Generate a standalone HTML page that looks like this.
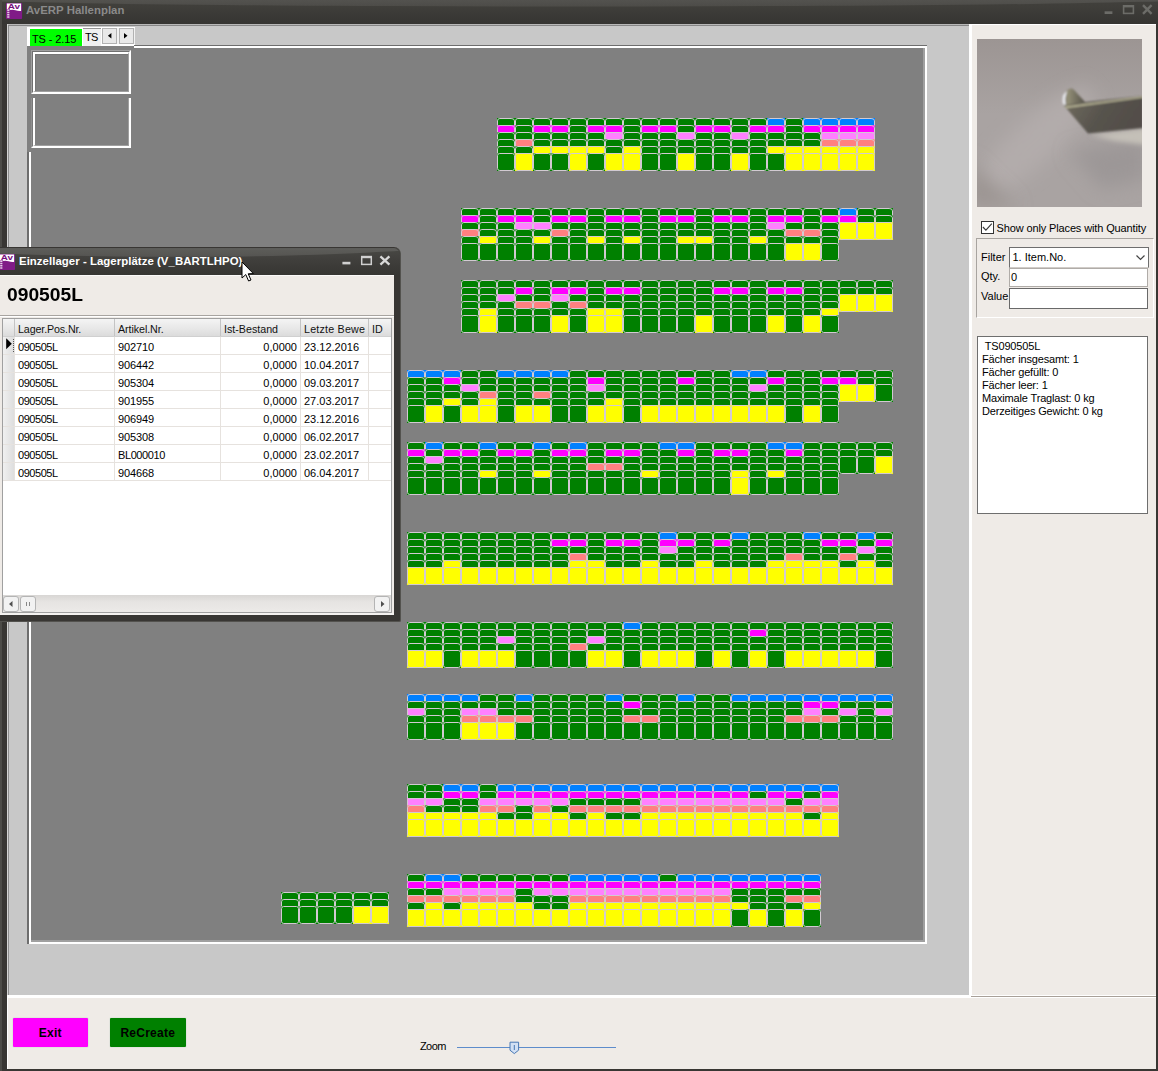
<!DOCTYPE html>
<html>
<head>
<meta charset="utf-8">
<title>AvERP Hallenplan</title>
<style>
*{box-sizing:border-box;margin:0;padding:0}
html,body{width:1158px;height:1071px;overflow:hidden;background:#383633;font-family:"Liberation Sans",sans-serif;font-size:11px;color:#000}
.a{position:absolute}
.t{position:absolute;white-space:pre;line-height:13px}
#titlebar{left:0;top:0;width:1158px;height:24px;background:linear-gradient(#42413d 0,#3f3e3a 7px,#3b3a37 14px,#363532 24px)}
#lb{left:0;top:0;width:2px;height:1071px;background:#4c4b47}
#client{left:7px;top:24px;width:1149px;height:1045px;background:#c8c8c8}
#rp{left:969.3px;top:24px;width:186.7px;height:973px;background:linear-gradient(90deg,#fff 2.7px,#efebe7 2.7px);border-top:1px solid #fff}
#bp{left:8px;top:995.2px;width:1148px;height:73.7px;background:linear-gradient(#fff 2.6px,#efebe7 2.6px)}
#canvas{left:27px;top:46px;width:900px;height:898px;background:#808080}
.btn{position:absolute;text-align:center;font-weight:bold;font-size:12px;line-height:30px;height:30px}
table{border-collapse:collapse}
</style>
</head>
<body>
<!-- main window frame -->
<div class="a" id="titlebar"></div>
<svg class="a" style="left:0;top:0" width="1158" height="24" viewBox="0 0 1158 24"><defs><linearGradient id="gl0" x1="0" y1="0" x2="0" y2="1"><stop offset="0" stop-color="#fff" stop-opacity=".13"/><stop offset="1" stop-color="#fff" stop-opacity=".07"/></linearGradient></defs><ellipse cx="579" cy="-2.3" rx="640" ry="8.8" fill="url(#gl0)"/></svg>
<div class="a" id="lb"></div>
<div class="a" id="client"></div>
<div class="a" style="left:7px;top:24px;width:1px;height:1045px;background:#d4d4d4"></div>
<div class="a" style="left:8px;top:25px;width:1px;height:970px;background:#8e8e8e"></div>
<div class="a" style="left:8px;top:24px;width:961px;height:1px;background:#b8b8b8"></div>
<div class="a" style="left:8px;top:25px;width:961px;height:1px;background:#868686"></div>

<!-- title icon + text -->
<svg class="a" style="left:6px;top:3px" width="17" height="17" viewBox="0 0 17 17">
<rect x="0" y="0" width="16.1" height="16" rx="0.8" fill="#801b87"/>
<path d="M0.9 0.4H15.1V7.9Q12 8.2 9.5 7.2Q7 6.3 4.2 6.9L4 6.2H0.9z" fill="#fff"/>
<text x="1.7" y="5.7" font-family="Liberation Sans" font-weight="bold" font-size="6.6" fill="#760e7c" textLength="12.3" lengthAdjust="spacingAndGlyphs">Av</text>
<path d="M2.3 6.4V15" stroke="#e6cde8" stroke-width="2.2" stroke-dasharray="1.5 0.8"/>
</svg>
<div class="t" style="left:26px;top:3px;font-weight:bold;font-size:11.4px;line-height:14px;color:#8a8a8a;letter-spacing:0.02px">AvERP Hallenplan</div>
<!-- main window controls -->
<svg class="a" style="left:1100px;top:0" width="58" height="24" viewBox="0 0 58 24">
<rect x="4.6" y="11.3" width="7.8" height="2.7" fill="#6c6c68"/>
<rect x="23.6" y="5.8" width="9.8" height="7.6" fill="none" stroke="#6c6c68" stroke-width="1.6"/>
<rect x="23" y="5" width="11" height="2.4" fill="#6c6c68"/>
<path d="M43 5.2 L51.6 13.8 M51.6 5.2 L43 13.8" stroke="#6c6c68" stroke-width="2.4" fill="none"/>
</svg>

<!-- right + bottom panels -->
<div class="a" id="rp"></div>
<div class="a" id="bp"></div>
<div class="a" style="left:7px;top:995.2px;width:1.4px;height:73.7px;background:#fff"></div>
<div class="a" style="left:971px;top:996px;width:185px;height:1px;background:#a8a098"></div>

<!-- tab strip -->
<div class="a" style="left:27px;top:26.5px;width:108px;height:19.5px;background:#fff"></div>
<div class="a" style="left:101.5px;top:28px;width:33px;height:16px;background:#f2f2f2"></div>
<div class="a" style="left:29.6px;top:28.7px;width:52.4px;height:17.3px;background:#00ff00"></div>
<div class="t" style="left:32px;top:33px;font-size:11px;letter-spacing:-0.1px">TS - 2.15</div>
<div class="a" style="left:83px;top:28px;width:18px;height:18px;background:#f0f0f0;border-top:1px solid #949494"></div>
<div class="t" style="left:85px;top:31px;font-size:11px;letter-spacing:-0.8px">TS</div>
<div class="a" style="left:102px;top:28.4px;width:15.2px;height:15.2px;background:#e9e9e9;border:1px solid #b2b2b2"></div>
<div class="a" style="left:118.5px;top:28.4px;width:15.1px;height:15.2px;background:#e9e9e9;border:1px solid #b2b2b2"></div>
<svg class="a" style="left:102px;top:28px" width="32" height="16" viewBox="0 0 32 16"><path d="M9.4 5 L9.4 10.4 L5.9 7.7z M22 5 L22 10.4 L25.5 7.7z" fill="#000"/></svg>
<!-- canvas -->
<div class="a" id="canvas"></div>
<div class="a" style="left:134px;top:45px;width:793px;height:1px;background:#6e6e6e"></div>
<div class="a" style="left:134px;top:46px;width:793px;height:2px;background:#fff"></div>
<div class="a" style="left:27.4px;top:152px;width:1.6px;height:792px;background:#6e6e6e"></div>
<div class="a" style="left:29px;top:152px;width:2px;height:792px;background:#fff"></div>
<div class="a" style="left:923px;top:48px;width:2px;height:894px;background:#a0a0a0"></div>
<div class="a" style="left:925px;top:46px;width:2px;height:898px;background:#fff"></div>
<div class="a" style="left:31px;top:940px;width:894px;height:2px;background:#a0a0a0"></div>
<div class="a" style="left:29px;top:942px;width:898px;height:2px;background:#fff"></div>
<!-- two boxes -->
<div class="a" style="left:31px;top:50px;width:100px;height:44px;border-style:solid;border-color:#a0a0a0 #fff #fff #a0a0a0;border-width:1px 1px 1px 1px"><div style="width:100%;height:100%;border-style:solid;border-color:#707070 #fff #fff #707070;border-width:1px"><div style="width:100%;height:100%;border-style:solid;border-color:#fff #a0a0a0 #a0a0a0 #fff;border-width:2px 1px 1px 2px"><div style="width:100%;height:100%;border-style:solid;border-color:#767676 #808080 #808080 #767676;border-width:1px 0 0 1px"></div></div></div></div>
<div class="a" style="left:31px;top:98px;width:100px;height:50px;border-style:solid;border-color:#a0a0a0 #fff #fff #909090;border-width:0 1px 1px 1px"><div style="width:100%;height:100%;border-style:solid;border-color:#707070 #fff #fff #787878;border-width:0 1px 1px 1px"><div style="width:100%;height:100%;border-style:solid;border-color:#fff #a0a0a0 #a0a0a0 #fff;border-width:0 1px 1px 2px"></div></div></div>
<!-- storage cells -->
<svg class="a" style="left:0;top:0" width="1158" height="1071" viewBox="0 0 1158 1071">
<defs>
<path id="t" d="M0.5 7.5V2.9Q0.5 0.5 2.9 0.5H14.1Q17.5 0.5 17.5 2.9V7.5" fill="none" stroke="#d2cad2" stroke-width="1"/>
<rect id="T" x="0.5" y="0.5" width="17" height="17" rx="2.2" fill="none" stroke="#d2cad2" stroke-width="1"/>
</defs>
<path fill="#008000" d="M497 118h270v7h-270zM785 118h18v7h-18zM515 125h18v7h-18zM569 125h18v7h-18zM623 125h18v7h-18zM677 125h18v7h-18zM731 125h18v7h-18zM785 125h18v7h-18zM497 132h108v7h-108zM623 132h54v7h-54zM695 132h36v7h-36zM749 132h72v7h-72zM497 139h18v7h-18zM533 139h288v7h-288zM497 146h36v7h-36zM605 146h18v7h-18zM641 146h126v7h-126zM497 153h18v18h-18zM533 153h36v18h-36zM587 153h18v18h-18zM641 153h36v18h-36zM695 153h36v18h-36zM749 153h36v18h-36zM461 208h378v7h-378zM857 208h36v7h-36zM479 215h18v7h-18zM533 215h18v7h-18zM587 215h18v7h-18zM641 215h18v7h-18zM695 215h18v7h-18zM749 215h18v7h-18zM803 215h18v7h-18zM857 215h36v7h-36zM461 222h54v7h-54zM551 222h216v7h-216zM785 222h54v7h-54zM479 229h72v7h-72zM569 229h216v7h-216zM821 229h18v7h-18zM461 236h18v7h-18zM497 236h36v7h-36zM551 236h36v7h-36zM605 236h18v7h-18zM641 236h36v7h-36zM713 236h36v7h-36zM767 236h72v7h-72zM461 243h324v18h-324zM821 243h18v18h-18zM461 280h432v7h-432zM461 287h54v7h-54zM533 287h18v7h-18zM587 287h18v7h-18zM641 287h72v7h-72zM749 287h18v7h-18zM803 287h90v7h-90zM461 294h36v7h-36zM515 294h36v7h-36zM569 294h270v7h-270zM461 301h54v7h-54zM551 301h18v7h-18zM587 301h252v7h-252zM461 308h18v7h-18zM497 308h90v7h-90zM623 308h198v7h-198zM461 315h18v18h-18zM497 315h54v18h-54zM569 315h18v18h-18zM623 315h72v18h-72zM713 315h54v18h-54zM785 315h18v18h-18zM821 315h18v18h-18zM461 370h36v7h-36zM569 370h162v7h-162zM767 370h126v7h-126zM407 377h36v7h-36zM461 377h126v7h-126zM605 377h72v7h-72zM695 377h72v7h-72zM785 377h36v7h-36zM857 377h36v7h-36zM407 384h54v7h-54zM479 384h108v7h-108zM605 384h144v7h-144zM767 384h72v7h-72zM875 384h18v18h-18zM407 391h72v7h-72zM497 391h36v7h-36zM551 391h288v7h-288zM407 398h36v7h-36zM461 398h18v7h-18zM497 398h108v7h-108zM623 398h216v7h-216zM407 405h18v18h-18zM443 405h18v18h-18zM497 405h18v18h-18zM551 405h36v18h-36zM623 405h18v18h-18zM785 405h18v18h-18zM821 405h18v18h-18zM407 442h18v7h-18zM443 442h36v7h-36zM497 442h36v7h-36zM551 442h18v7h-18zM587 442h72v7h-72zM695 442h72v7h-72zM803 442h90v7h-90zM425 449h18v7h-18zM479 449h18v7h-18zM533 449h18v7h-18zM587 449h18v7h-18zM641 449h36v7h-36zM695 449h18v7h-18zM749 449h36v7h-36zM803 449h90v7h-90zM407 456h18v7h-18zM443 456h396v7h-396zM839 456h36v18h-36zM407 463h180v7h-180zM623 463h216v7h-216zM407 470h72v7h-72zM497 470h36v7h-36zM551 470h90v7h-90zM659 470h72v7h-72zM749 470h18v7h-18zM785 470h54v7h-54zM407 477h324v18h-324zM749 477h90v18h-90zM407 532h252v7h-252zM677 532h54v7h-54zM749 532h54v7h-54zM821 532h36v7h-36zM875 532h18v7h-18zM407 539h144v7h-144zM587 539h18v7h-18zM641 539h18v7h-18zM695 539h18v7h-18zM731 539h90v7h-90zM857 539h18v7h-18zM407 546h252v7h-252zM677 546h180v7h-180zM875 546h18v7h-18zM407 553h162v7h-162zM587 553h198v7h-198zM803 553h36v7h-36zM857 553h36v7h-36zM407 560h36v7h-36zM461 560h108v7h-108zM605 560h36v7h-36zM659 560h36v7h-36zM713 560h54v7h-54zM839 560h18v7h-18zM875 560h18v7h-18zM407 622h216v7h-216zM641 622h252v7h-252zM407 629h342v7h-342zM767 629h126v7h-126zM407 636h90v7h-90zM515 636h72v7h-72zM605 636h288v7h-288zM407 643h162v7h-162zM587 643h306v7h-306zM443 650h18v18h-18zM515 650h72v18h-72zM623 650h18v18h-18zM695 650h18v18h-18zM731 650h18v18h-18zM767 650h18v18h-18zM875 650h18v18h-18zM479 694h36v7h-36zM533 694h72v7h-72zM623 694h54v7h-54zM695 694h36v7h-36zM407 701h216v7h-216zM641 701h162v7h-162zM839 701h54v7h-54zM425 708h36v7h-36zM497 708h306v7h-306zM821 708h18v7h-18zM857 708h18v7h-18zM407 715h54v7h-54zM533 715h90v7h-90zM659 715h126v7h-126zM839 715h54v7h-54zM407 722h54v18h-54zM515 722h378v18h-378zM407 784h36v7h-36zM479 784h18v7h-18zM407 791h36v7h-36zM479 791h18v7h-18zM749 791h18v7h-18zM803 791h18v7h-18zM443 798h36v7h-36zM569 798h72v7h-72zM785 798h18v7h-18zM425 805h54v7h-54zM515 805h18v7h-18zM551 805h18v7h-18zM497 812h36v7h-36zM569 812h18v7h-18zM605 812h36v7h-36zM803 812h18v7h-18zM407 874h18v7h-18zM461 874h108v7h-108zM659 874h18v7h-18zM407 888h36v7h-36zM515 888h18v7h-18zM731 888h90v7h-90zM281 892h108v7h-108zM515 895h54v7h-54zM731 895h54v7h-54zM281 899h108v7h-108zM407 902h18v7h-18zM443 902h18v7h-18zM533 902h36v7h-36zM749 902h54v7h-54zM281 906h72v18h-72zM731 909h18v18h-18zM767 909h18v18h-18zM803 909h18v18h-18z"/>
<path fill="#ff00ff" d="M497 125h18v7h-18zM533 125h36v7h-36zM587 125h36v7h-36zM641 125h36v7h-36zM695 125h36v7h-36zM749 125h36v7h-36zM803 125h72v7h-72zM461 215h18v7h-18zM497 215h36v7h-36zM551 215h36v7h-36zM605 215h36v7h-36zM659 215h36v7h-36zM713 215h36v7h-36zM767 215h36v7h-36zM821 215h36v7h-36zM515 287h18v7h-18zM551 287h36v7h-36zM605 287h36v7h-36zM713 287h36v7h-36zM767 287h36v7h-36zM443 377h18v7h-18zM587 377h18v7h-18zM677 377h18v7h-18zM767 377h18v7h-18zM821 377h36v7h-36zM407 449h18v7h-18zM443 449h36v7h-36zM497 449h36v7h-36zM551 449h36v7h-36zM605 449h36v7h-36zM677 449h18v7h-18zM713 449h36v7h-36zM785 449h18v7h-18zM551 539h36v7h-36zM605 539h36v7h-36zM659 539h36v7h-36zM713 539h18v7h-18zM821 539h36v7h-36zM875 539h18v7h-18zM749 629h18v7h-18zM623 701h18v7h-18zM803 701h36v7h-36zM443 791h36v7h-36zM497 791h252v7h-252zM767 791h36v7h-36zM821 791h18v7h-18zM407 881h414v7h-414z"/>
<path fill="#ff80ff" d="M605 132h18v7h-18zM677 132h18v7h-18zM731 132h18v7h-18zM821 132h54v7h-54zM515 222h36v7h-36zM767 222h18v7h-18zM497 294h18v7h-18zM551 294h18v7h-18zM461 384h18v7h-18zM587 384h18v7h-18zM749 384h18v7h-18zM425 456h18v7h-18zM659 546h18v7h-18zM857 546h18v7h-18zM497 636h18v7h-18zM587 636h18v7h-18zM407 708h18v7h-18zM461 708h36v7h-36zM803 708h18v7h-18zM839 708h18v7h-18zM875 708h18v7h-18zM407 798h36v7h-36zM479 798h90v7h-90zM641 798h144v7h-144zM803 798h36v7h-36zM443 888h72v7h-72zM533 888h198v7h-198z"/>
<path fill="#ff8080" d="M515 139h18v7h-18zM821 139h54v7h-54zM461 229h18v7h-18zM551 229h18v7h-18zM785 229h36v7h-36zM515 301h36v7h-36zM569 301h18v7h-18zM479 391h18v7h-18zM533 391h18v7h-18zM587 463h36v7h-36zM569 553h18v7h-18zM785 553h18v7h-18zM839 553h18v7h-18zM569 643h18v7h-18zM461 715h72v7h-72zM623 715h36v7h-36zM785 715h54v7h-54zM407 805h18v7h-18zM479 805h36v7h-36zM533 805h18v7h-18zM569 805h270v7h-270zM407 895h108v7h-108zM569 895h162v7h-162zM785 895h36v7h-36z"/>
<path fill="#ffff00" d="M533 146h72v7h-72zM623 146h18v7h-18zM767 146h108v7h-108zM515 153h18v18h-18zM569 153h18v18h-18zM605 153h36v18h-36zM677 153h18v18h-18zM731 153h18v18h-18zM785 153h90v18h-90zM839 222h54v18h-54zM479 236h18v7h-18zM533 236h18v7h-18zM587 236h18v7h-18zM623 236h18v7h-18zM677 236h36v7h-36zM749 236h18v7h-18zM785 243h36v18h-36zM839 294h54v18h-54zM479 308h18v7h-18zM587 308h36v7h-36zM821 308h18v7h-18zM479 315h18v18h-18zM551 315h18v18h-18zM587 315h36v18h-36zM695 315h18v18h-18zM767 315h18v18h-18zM803 315h18v18h-18zM839 384h36v18h-36zM443 398h18v7h-18zM479 398h18v7h-18zM605 398h18v7h-18zM425 405h18v18h-18zM461 405h36v18h-36zM515 405h36v18h-36zM587 405h36v18h-36zM641 405h144v18h-144zM803 405h18v18h-18zM875 456h18v18h-18zM479 470h18v7h-18zM533 470h18v7h-18zM641 470h18v7h-18zM731 470h18v7h-18zM767 470h18v7h-18zM731 477h18v18h-18zM443 560h18v7h-18zM569 560h36v7h-36zM641 560h18v7h-18zM695 560h18v7h-18zM767 560h72v7h-72zM857 560h18v7h-18zM407 567h486v18h-486zM407 650h36v18h-36zM461 650h54v18h-54zM587 650h36v18h-36zM641 650h54v18h-54zM713 650h18v18h-18zM749 650h18v18h-18zM785 650h90v18h-90zM461 722h54v18h-54zM407 812h90v7h-90zM533 812h36v7h-36zM587 812h18v7h-18zM641 812h162v7h-162zM821 812h18v7h-18zM407 819h432v18h-432zM425 902h18v7h-18zM461 902h72v7h-72zM569 902h180v7h-180zM803 902h18v7h-18zM353 906h36v18h-36zM407 909h324v18h-324zM749 909h18v18h-18zM785 909h18v18h-18z"/>
<path fill="#0080ff" d="M767 118h18v7h-18zM803 118h72v7h-72zM839 208h18v7h-18zM407 370h54v7h-54zM497 370h72v7h-72zM731 370h36v7h-36zM425 442h18v7h-18zM479 442h18v7h-18zM533 442h18v7h-18zM569 442h18v7h-18zM659 442h36v7h-36zM767 442h36v7h-36zM659 532h18v7h-18zM731 532h18v7h-18zM803 532h18v7h-18zM857 532h18v7h-18zM623 622h18v7h-18zM407 694h72v7h-72zM515 694h18v7h-18zM605 694h18v7h-18zM677 694h18v7h-18zM731 694h162v7h-162zM443 784h36v7h-36zM497 784h342v7h-342zM425 874h36v7h-36zM569 874h90v7h-90zM677 874h144v7h-144z"/>
<use href="#t" x="497" y="118"/><use href="#t" x="515" y="118"/><use href="#t" x="533" y="118"/><use href="#t" x="551" y="118"/><use href="#t" x="569" y="118"/><use href="#t" x="587" y="118"/><use href="#t" x="605" y="118"/><use href="#t" x="623" y="118"/><use href="#t" x="641" y="118"/><use href="#t" x="659" y="118"/><use href="#t" x="677" y="118"/><use href="#t" x="695" y="118"/><use href="#t" x="713" y="118"/><use href="#t" x="731" y="118"/><use href="#t" x="749" y="118"/><use href="#t" x="767" y="118"/><use href="#t" x="785" y="118"/><use href="#t" x="803" y="118"/><use href="#t" x="821" y="118"/><use href="#t" x="839" y="118"/><use href="#t" x="857" y="118"/><use href="#t" x="497" y="125"/><use href="#t" x="515" y="125"/><use href="#t" x="533" y="125"/><use href="#t" x="551" y="125"/><use href="#t" x="569" y="125"/><use href="#t" x="587" y="125"/><use href="#t" x="605" y="125"/><use href="#t" x="623" y="125"/><use href="#t" x="641" y="125"/><use href="#t" x="659" y="125"/><use href="#t" x="677" y="125"/><use href="#t" x="695" y="125"/><use href="#t" x="713" y="125"/><use href="#t" x="731" y="125"/><use href="#t" x="749" y="125"/><use href="#t" x="767" y="125"/><use href="#t" x="785" y="125"/><use href="#t" x="803" y="125"/><use href="#t" x="821" y="125"/><use href="#t" x="839" y="125"/><use href="#t" x="857" y="125"/><use href="#t" x="497" y="132"/><use href="#t" x="515" y="132"/><use href="#t" x="533" y="132"/><use href="#t" x="551" y="132"/><use href="#t" x="569" y="132"/><use href="#t" x="587" y="132"/><use href="#t" x="605" y="132"/><use href="#t" x="623" y="132"/><use href="#t" x="641" y="132"/><use href="#t" x="659" y="132"/><use href="#t" x="677" y="132"/><use href="#t" x="695" y="132"/><use href="#t" x="713" y="132"/><use href="#t" x="731" y="132"/><use href="#t" x="749" y="132"/><use href="#t" x="767" y="132"/><use href="#t" x="785" y="132"/><use href="#t" x="803" y="132"/><use href="#t" x="821" y="132"/><use href="#t" x="839" y="132"/><use href="#t" x="857" y="132"/><use href="#t" x="497" y="139"/><use href="#t" x="515" y="139"/><use href="#t" x="533" y="139"/><use href="#t" x="551" y="139"/><use href="#t" x="569" y="139"/><use href="#t" x="587" y="139"/><use href="#t" x="605" y="139"/><use href="#t" x="623" y="139"/><use href="#t" x="641" y="139"/><use href="#t" x="659" y="139"/><use href="#t" x="677" y="139"/><use href="#t" x="695" y="139"/><use href="#t" x="713" y="139"/><use href="#t" x="731" y="139"/><use href="#t" x="749" y="139"/><use href="#t" x="767" y="139"/><use href="#t" x="785" y="139"/><use href="#t" x="803" y="139"/><use href="#t" x="821" y="139"/><use href="#t" x="839" y="139"/><use href="#t" x="857" y="139"/><use href="#t" x="497" y="146"/><use href="#t" x="515" y="146"/><use href="#t" x="533" y="146"/><use href="#t" x="551" y="146"/><use href="#t" x="569" y="146"/><use href="#t" x="587" y="146"/><use href="#t" x="605" y="146"/><use href="#t" x="623" y="146"/><use href="#t" x="641" y="146"/><use href="#t" x="659" y="146"/><use href="#t" x="677" y="146"/><use href="#t" x="695" y="146"/><use href="#t" x="713" y="146"/><use href="#t" x="731" y="146"/><use href="#t" x="749" y="146"/><use href="#t" x="767" y="146"/><use href="#t" x="785" y="146"/><use href="#t" x="803" y="146"/><use href="#t" x="821" y="146"/><use href="#t" x="839" y="146"/><use href="#t" x="857" y="146"/><use href="#t" x="461" y="208"/><use href="#t" x="479" y="208"/><use href="#t" x="497" y="208"/><use href="#t" x="515" y="208"/><use href="#t" x="533" y="208"/><use href="#t" x="551" y="208"/><use href="#t" x="569" y="208"/><use href="#t" x="587" y="208"/><use href="#t" x="605" y="208"/><use href="#t" x="623" y="208"/><use href="#t" x="641" y="208"/><use href="#t" x="659" y="208"/><use href="#t" x="677" y="208"/><use href="#t" x="695" y="208"/><use href="#t" x="713" y="208"/><use href="#t" x="731" y="208"/><use href="#t" x="749" y="208"/><use href="#t" x="767" y="208"/><use href="#t" x="785" y="208"/><use href="#t" x="803" y="208"/><use href="#t" x="821" y="208"/><use href="#t" x="839" y="208"/><use href="#t" x="857" y="208"/><use href="#t" x="875" y="208"/><use href="#t" x="461" y="215"/><use href="#t" x="479" y="215"/><use href="#t" x="497" y="215"/><use href="#t" x="515" y="215"/><use href="#t" x="533" y="215"/><use href="#t" x="551" y="215"/><use href="#t" x="569" y="215"/><use href="#t" x="587" y="215"/><use href="#t" x="605" y="215"/><use href="#t" x="623" y="215"/><use href="#t" x="641" y="215"/><use href="#t" x="659" y="215"/><use href="#t" x="677" y="215"/><use href="#t" x="695" y="215"/><use href="#t" x="713" y="215"/><use href="#t" x="731" y="215"/><use href="#t" x="749" y="215"/><use href="#t" x="767" y="215"/><use href="#t" x="785" y="215"/><use href="#t" x="803" y="215"/><use href="#t" x="821" y="215"/><use href="#t" x="839" y="215"/><use href="#t" x="857" y="215"/><use href="#t" x="875" y="215"/><use href="#t" x="461" y="222"/><use href="#t" x="479" y="222"/><use href="#t" x="497" y="222"/><use href="#t" x="515" y="222"/><use href="#t" x="533" y="222"/><use href="#t" x="551" y="222"/><use href="#t" x="569" y="222"/><use href="#t" x="587" y="222"/><use href="#t" x="605" y="222"/><use href="#t" x="623" y="222"/><use href="#t" x="641" y="222"/><use href="#t" x="659" y="222"/><use href="#t" x="677" y="222"/><use href="#t" x="695" y="222"/><use href="#t" x="713" y="222"/><use href="#t" x="731" y="222"/><use href="#t" x="749" y="222"/><use href="#t" x="767" y="222"/><use href="#t" x="785" y="222"/><use href="#t" x="803" y="222"/><use href="#t" x="821" y="222"/><use href="#t" x="461" y="229"/><use href="#t" x="479" y="229"/><use href="#t" x="497" y="229"/><use href="#t" x="515" y="229"/><use href="#t" x="533" y="229"/><use href="#t" x="551" y="229"/><use href="#t" x="569" y="229"/><use href="#t" x="587" y="229"/><use href="#t" x="605" y="229"/><use href="#t" x="623" y="229"/><use href="#t" x="641" y="229"/><use href="#t" x="659" y="229"/><use href="#t" x="677" y="229"/><use href="#t" x="695" y="229"/><use href="#t" x="713" y="229"/><use href="#t" x="731" y="229"/><use href="#t" x="749" y="229"/><use href="#t" x="767" y="229"/><use href="#t" x="785" y="229"/><use href="#t" x="803" y="229"/><use href="#t" x="821" y="229"/><use href="#t" x="461" y="236"/><use href="#t" x="479" y="236"/><use href="#t" x="497" y="236"/><use href="#t" x="515" y="236"/><use href="#t" x="533" y="236"/><use href="#t" x="551" y="236"/><use href="#t" x="569" y="236"/><use href="#t" x="587" y="236"/><use href="#t" x="605" y="236"/><use href="#t" x="623" y="236"/><use href="#t" x="641" y="236"/><use href="#t" x="659" y="236"/><use href="#t" x="677" y="236"/><use href="#t" x="695" y="236"/><use href="#t" x="713" y="236"/><use href="#t" x="731" y="236"/><use href="#t" x="749" y="236"/><use href="#t" x="767" y="236"/><use href="#t" x="785" y="236"/><use href="#t" x="803" y="236"/><use href="#t" x="821" y="236"/><use href="#t" x="461" y="280"/><use href="#t" x="479" y="280"/><use href="#t" x="497" y="280"/><use href="#t" x="515" y="280"/><use href="#t" x="533" y="280"/><use href="#t" x="551" y="280"/><use href="#t" x="569" y="280"/><use href="#t" x="587" y="280"/><use href="#t" x="605" y="280"/><use href="#t" x="623" y="280"/><use href="#t" x="641" y="280"/><use href="#t" x="659" y="280"/><use href="#t" x="677" y="280"/><use href="#t" x="695" y="280"/><use href="#t" x="713" y="280"/><use href="#t" x="731" y="280"/><use href="#t" x="749" y="280"/><use href="#t" x="767" y="280"/><use href="#t" x="785" y="280"/><use href="#t" x="803" y="280"/><use href="#t" x="821" y="280"/><use href="#t" x="839" y="280"/><use href="#t" x="857" y="280"/><use href="#t" x="875" y="280"/><use href="#t" x="461" y="287"/><use href="#t" x="479" y="287"/><use href="#t" x="497" y="287"/><use href="#t" x="515" y="287"/><use href="#t" x="533" y="287"/><use href="#t" x="551" y="287"/><use href="#t" x="569" y="287"/><use href="#t" x="587" y="287"/><use href="#t" x="605" y="287"/><use href="#t" x="623" y="287"/><use href="#t" x="641" y="287"/><use href="#t" x="659" y="287"/><use href="#t" x="677" y="287"/><use href="#t" x="695" y="287"/><use href="#t" x="713" y="287"/><use href="#t" x="731" y="287"/><use href="#t" x="749" y="287"/><use href="#t" x="767" y="287"/><use href="#t" x="785" y="287"/><use href="#t" x="803" y="287"/><use href="#t" x="821" y="287"/><use href="#t" x="839" y="287"/><use href="#t" x="857" y="287"/><use href="#t" x="875" y="287"/><use href="#t" x="461" y="294"/><use href="#t" x="479" y="294"/><use href="#t" x="497" y="294"/><use href="#t" x="515" y="294"/><use href="#t" x="533" y="294"/><use href="#t" x="551" y="294"/><use href="#t" x="569" y="294"/><use href="#t" x="587" y="294"/><use href="#t" x="605" y="294"/><use href="#t" x="623" y="294"/><use href="#t" x="641" y="294"/><use href="#t" x="659" y="294"/><use href="#t" x="677" y="294"/><use href="#t" x="695" y="294"/><use href="#t" x="713" y="294"/><use href="#t" x="731" y="294"/><use href="#t" x="749" y="294"/><use href="#t" x="767" y="294"/><use href="#t" x="785" y="294"/><use href="#t" x="803" y="294"/><use href="#t" x="821" y="294"/><use href="#t" x="461" y="301"/><use href="#t" x="479" y="301"/><use href="#t" x="497" y="301"/><use href="#t" x="515" y="301"/><use href="#t" x="533" y="301"/><use href="#t" x="551" y="301"/><use href="#t" x="569" y="301"/><use href="#t" x="587" y="301"/><use href="#t" x="605" y="301"/><use href="#t" x="623" y="301"/><use href="#t" x="641" y="301"/><use href="#t" x="659" y="301"/><use href="#t" x="677" y="301"/><use href="#t" x="695" y="301"/><use href="#t" x="713" y="301"/><use href="#t" x="731" y="301"/><use href="#t" x="749" y="301"/><use href="#t" x="767" y="301"/><use href="#t" x="785" y="301"/><use href="#t" x="803" y="301"/><use href="#t" x="821" y="301"/><use href="#t" x="461" y="308"/><use href="#t" x="479" y="308"/><use href="#t" x="497" y="308"/><use href="#t" x="515" y="308"/><use href="#t" x="533" y="308"/><use href="#t" x="551" y="308"/><use href="#t" x="569" y="308"/><use href="#t" x="587" y="308"/><use href="#t" x="605" y="308"/><use href="#t" x="623" y="308"/><use href="#t" x="641" y="308"/><use href="#t" x="659" y="308"/><use href="#t" x="677" y="308"/><use href="#t" x="695" y="308"/><use href="#t" x="713" y="308"/><use href="#t" x="731" y="308"/><use href="#t" x="749" y="308"/><use href="#t" x="767" y="308"/><use href="#t" x="785" y="308"/><use href="#t" x="803" y="308"/><use href="#t" x="821" y="308"/><use href="#t" x="407" y="370"/><use href="#t" x="425" y="370"/><use href="#t" x="443" y="370"/><use href="#t" x="461" y="370"/><use href="#t" x="479" y="370"/><use href="#t" x="497" y="370"/><use href="#t" x="515" y="370"/><use href="#t" x="533" y="370"/><use href="#t" x="551" y="370"/><use href="#t" x="569" y="370"/><use href="#t" x="587" y="370"/><use href="#t" x="605" y="370"/><use href="#t" x="623" y="370"/><use href="#t" x="641" y="370"/><use href="#t" x="659" y="370"/><use href="#t" x="677" y="370"/><use href="#t" x="695" y="370"/><use href="#t" x="713" y="370"/><use href="#t" x="731" y="370"/><use href="#t" x="749" y="370"/><use href="#t" x="767" y="370"/><use href="#t" x="785" y="370"/><use href="#t" x="803" y="370"/><use href="#t" x="821" y="370"/><use href="#t" x="839" y="370"/><use href="#t" x="857" y="370"/><use href="#t" x="875" y="370"/><use href="#t" x="407" y="377"/><use href="#t" x="425" y="377"/><use href="#t" x="443" y="377"/><use href="#t" x="461" y="377"/><use href="#t" x="479" y="377"/><use href="#t" x="497" y="377"/><use href="#t" x="515" y="377"/><use href="#t" x="533" y="377"/><use href="#t" x="551" y="377"/><use href="#t" x="569" y="377"/><use href="#t" x="587" y="377"/><use href="#t" x="605" y="377"/><use href="#t" x="623" y="377"/><use href="#t" x="641" y="377"/><use href="#t" x="659" y="377"/><use href="#t" x="677" y="377"/><use href="#t" x="695" y="377"/><use href="#t" x="713" y="377"/><use href="#t" x="731" y="377"/><use href="#t" x="749" y="377"/><use href="#t" x="767" y="377"/><use href="#t" x="785" y="377"/><use href="#t" x="803" y="377"/><use href="#t" x="821" y="377"/><use href="#t" x="839" y="377"/><use href="#t" x="857" y="377"/><use href="#t" x="875" y="377"/><use href="#t" x="407" y="384"/><use href="#t" x="425" y="384"/><use href="#t" x="443" y="384"/><use href="#t" x="461" y="384"/><use href="#t" x="479" y="384"/><use href="#t" x="497" y="384"/><use href="#t" x="515" y="384"/><use href="#t" x="533" y="384"/><use href="#t" x="551" y="384"/><use href="#t" x="569" y="384"/><use href="#t" x="587" y="384"/><use href="#t" x="605" y="384"/><use href="#t" x="623" y="384"/><use href="#t" x="641" y="384"/><use href="#t" x="659" y="384"/><use href="#t" x="677" y="384"/><use href="#t" x="695" y="384"/><use href="#t" x="713" y="384"/><use href="#t" x="731" y="384"/><use href="#t" x="749" y="384"/><use href="#t" x="767" y="384"/><use href="#t" x="785" y="384"/><use href="#t" x="803" y="384"/><use href="#t" x="821" y="384"/><use href="#t" x="407" y="391"/><use href="#t" x="425" y="391"/><use href="#t" x="443" y="391"/><use href="#t" x="461" y="391"/><use href="#t" x="479" y="391"/><use href="#t" x="497" y="391"/><use href="#t" x="515" y="391"/><use href="#t" x="533" y="391"/><use href="#t" x="551" y="391"/><use href="#t" x="569" y="391"/><use href="#t" x="587" y="391"/><use href="#t" x="605" y="391"/><use href="#t" x="623" y="391"/><use href="#t" x="641" y="391"/><use href="#t" x="659" y="391"/><use href="#t" x="677" y="391"/><use href="#t" x="695" y="391"/><use href="#t" x="713" y="391"/><use href="#t" x="731" y="391"/><use href="#t" x="749" y="391"/><use href="#t" x="767" y="391"/><use href="#t" x="785" y="391"/><use href="#t" x="803" y="391"/><use href="#t" x="821" y="391"/><use href="#t" x="407" y="398"/><use href="#t" x="425" y="398"/><use href="#t" x="443" y="398"/><use href="#t" x="461" y="398"/><use href="#t" x="479" y="398"/><use href="#t" x="497" y="398"/><use href="#t" x="515" y="398"/><use href="#t" x="533" y="398"/><use href="#t" x="551" y="398"/><use href="#t" x="569" y="398"/><use href="#t" x="587" y="398"/><use href="#t" x="605" y="398"/><use href="#t" x="623" y="398"/><use href="#t" x="641" y="398"/><use href="#t" x="659" y="398"/><use href="#t" x="677" y="398"/><use href="#t" x="695" y="398"/><use href="#t" x="713" y="398"/><use href="#t" x="731" y="398"/><use href="#t" x="749" y="398"/><use href="#t" x="767" y="398"/><use href="#t" x="785" y="398"/><use href="#t" x="803" y="398"/><use href="#t" x="821" y="398"/><use href="#t" x="407" y="442"/><use href="#t" x="425" y="442"/><use href="#t" x="443" y="442"/><use href="#t" x="461" y="442"/><use href="#t" x="479" y="442"/><use href="#t" x="497" y="442"/><use href="#t" x="515" y="442"/><use href="#t" x="533" y="442"/><use href="#t" x="551" y="442"/><use href="#t" x="569" y="442"/><use href="#t" x="587" y="442"/><use href="#t" x="605" y="442"/><use href="#t" x="623" y="442"/><use href="#t" x="641" y="442"/><use href="#t" x="659" y="442"/><use href="#t" x="677" y="442"/><use href="#t" x="695" y="442"/><use href="#t" x="713" y="442"/><use href="#t" x="731" y="442"/><use href="#t" x="749" y="442"/><use href="#t" x="767" y="442"/><use href="#t" x="785" y="442"/><use href="#t" x="803" y="442"/><use href="#t" x="821" y="442"/><use href="#t" x="839" y="442"/><use href="#t" x="857" y="442"/><use href="#t" x="875" y="442"/><use href="#t" x="407" y="449"/><use href="#t" x="425" y="449"/><use href="#t" x="443" y="449"/><use href="#t" x="461" y="449"/><use href="#t" x="479" y="449"/><use href="#t" x="497" y="449"/><use href="#t" x="515" y="449"/><use href="#t" x="533" y="449"/><use href="#t" x="551" y="449"/><use href="#t" x="569" y="449"/><use href="#t" x="587" y="449"/><use href="#t" x="605" y="449"/><use href="#t" x="623" y="449"/><use href="#t" x="641" y="449"/><use href="#t" x="659" y="449"/><use href="#t" x="677" y="449"/><use href="#t" x="695" y="449"/><use href="#t" x="713" y="449"/><use href="#t" x="731" y="449"/><use href="#t" x="749" y="449"/><use href="#t" x="767" y="449"/><use href="#t" x="785" y="449"/><use href="#t" x="803" y="449"/><use href="#t" x="821" y="449"/><use href="#t" x="839" y="449"/><use href="#t" x="857" y="449"/><use href="#t" x="875" y="449"/><use href="#t" x="407" y="456"/><use href="#t" x="425" y="456"/><use href="#t" x="443" y="456"/><use href="#t" x="461" y="456"/><use href="#t" x="479" y="456"/><use href="#t" x="497" y="456"/><use href="#t" x="515" y="456"/><use href="#t" x="533" y="456"/><use href="#t" x="551" y="456"/><use href="#t" x="569" y="456"/><use href="#t" x="587" y="456"/><use href="#t" x="605" y="456"/><use href="#t" x="623" y="456"/><use href="#t" x="641" y="456"/><use href="#t" x="659" y="456"/><use href="#t" x="677" y="456"/><use href="#t" x="695" y="456"/><use href="#t" x="713" y="456"/><use href="#t" x="731" y="456"/><use href="#t" x="749" y="456"/><use href="#t" x="767" y="456"/><use href="#t" x="785" y="456"/><use href="#t" x="803" y="456"/><use href="#t" x="821" y="456"/><use href="#t" x="407" y="463"/><use href="#t" x="425" y="463"/><use href="#t" x="443" y="463"/><use href="#t" x="461" y="463"/><use href="#t" x="479" y="463"/><use href="#t" x="497" y="463"/><use href="#t" x="515" y="463"/><use href="#t" x="533" y="463"/><use href="#t" x="551" y="463"/><use href="#t" x="569" y="463"/><use href="#t" x="587" y="463"/><use href="#t" x="605" y="463"/><use href="#t" x="623" y="463"/><use href="#t" x="641" y="463"/><use href="#t" x="659" y="463"/><use href="#t" x="677" y="463"/><use href="#t" x="695" y="463"/><use href="#t" x="713" y="463"/><use href="#t" x="731" y="463"/><use href="#t" x="749" y="463"/><use href="#t" x="767" y="463"/><use href="#t" x="785" y="463"/><use href="#t" x="803" y="463"/><use href="#t" x="821" y="463"/><use href="#t" x="407" y="470"/><use href="#t" x="425" y="470"/><use href="#t" x="443" y="470"/><use href="#t" x="461" y="470"/><use href="#t" x="479" y="470"/><use href="#t" x="497" y="470"/><use href="#t" x="515" y="470"/><use href="#t" x="533" y="470"/><use href="#t" x="551" y="470"/><use href="#t" x="569" y="470"/><use href="#t" x="587" y="470"/><use href="#t" x="605" y="470"/><use href="#t" x="623" y="470"/><use href="#t" x="641" y="470"/><use href="#t" x="659" y="470"/><use href="#t" x="677" y="470"/><use href="#t" x="695" y="470"/><use href="#t" x="713" y="470"/><use href="#t" x="731" y="470"/><use href="#t" x="749" y="470"/><use href="#t" x="767" y="470"/><use href="#t" x="785" y="470"/><use href="#t" x="803" y="470"/><use href="#t" x="821" y="470"/><use href="#t" x="407" y="532"/><use href="#t" x="425" y="532"/><use href="#t" x="443" y="532"/><use href="#t" x="461" y="532"/><use href="#t" x="479" y="532"/><use href="#t" x="497" y="532"/><use href="#t" x="515" y="532"/><use href="#t" x="533" y="532"/><use href="#t" x="551" y="532"/><use href="#t" x="569" y="532"/><use href="#t" x="587" y="532"/><use href="#t" x="605" y="532"/><use href="#t" x="623" y="532"/><use href="#t" x="641" y="532"/><use href="#t" x="659" y="532"/><use href="#t" x="677" y="532"/><use href="#t" x="695" y="532"/><use href="#t" x="713" y="532"/><use href="#t" x="731" y="532"/><use href="#t" x="749" y="532"/><use href="#t" x="767" y="532"/><use href="#t" x="785" y="532"/><use href="#t" x="803" y="532"/><use href="#t" x="821" y="532"/><use href="#t" x="839" y="532"/><use href="#t" x="857" y="532"/><use href="#t" x="875" y="532"/><use href="#t" x="407" y="539"/><use href="#t" x="425" y="539"/><use href="#t" x="443" y="539"/><use href="#t" x="461" y="539"/><use href="#t" x="479" y="539"/><use href="#t" x="497" y="539"/><use href="#t" x="515" y="539"/><use href="#t" x="533" y="539"/><use href="#t" x="551" y="539"/><use href="#t" x="569" y="539"/><use href="#t" x="587" y="539"/><use href="#t" x="605" y="539"/><use href="#t" x="623" y="539"/><use href="#t" x="641" y="539"/><use href="#t" x="659" y="539"/><use href="#t" x="677" y="539"/><use href="#t" x="695" y="539"/><use href="#t" x="713" y="539"/><use href="#t" x="731" y="539"/><use href="#t" x="749" y="539"/><use href="#t" x="767" y="539"/><use href="#t" x="785" y="539"/><use href="#t" x="803" y="539"/><use href="#t" x="821" y="539"/><use href="#t" x="839" y="539"/><use href="#t" x="857" y="539"/><use href="#t" x="875" y="539"/><use href="#t" x="407" y="546"/><use href="#t" x="425" y="546"/><use href="#t" x="443" y="546"/><use href="#t" x="461" y="546"/><use href="#t" x="479" y="546"/><use href="#t" x="497" y="546"/><use href="#t" x="515" y="546"/><use href="#t" x="533" y="546"/><use href="#t" x="551" y="546"/><use href="#t" x="569" y="546"/><use href="#t" x="587" y="546"/><use href="#t" x="605" y="546"/><use href="#t" x="623" y="546"/><use href="#t" x="641" y="546"/><use href="#t" x="659" y="546"/><use href="#t" x="677" y="546"/><use href="#t" x="695" y="546"/><use href="#t" x="713" y="546"/><use href="#t" x="731" y="546"/><use href="#t" x="749" y="546"/><use href="#t" x="767" y="546"/><use href="#t" x="785" y="546"/><use href="#t" x="803" y="546"/><use href="#t" x="821" y="546"/><use href="#t" x="839" y="546"/><use href="#t" x="857" y="546"/><use href="#t" x="875" y="546"/><use href="#t" x="407" y="553"/><use href="#t" x="425" y="553"/><use href="#t" x="443" y="553"/><use href="#t" x="461" y="553"/><use href="#t" x="479" y="553"/><use href="#t" x="497" y="553"/><use href="#t" x="515" y="553"/><use href="#t" x="533" y="553"/><use href="#t" x="551" y="553"/><use href="#t" x="569" y="553"/><use href="#t" x="587" y="553"/><use href="#t" x="605" y="553"/><use href="#t" x="623" y="553"/><use href="#t" x="641" y="553"/><use href="#t" x="659" y="553"/><use href="#t" x="677" y="553"/><use href="#t" x="695" y="553"/><use href="#t" x="713" y="553"/><use href="#t" x="731" y="553"/><use href="#t" x="749" y="553"/><use href="#t" x="767" y="553"/><use href="#t" x="785" y="553"/><use href="#t" x="803" y="553"/><use href="#t" x="821" y="553"/><use href="#t" x="839" y="553"/><use href="#t" x="857" y="553"/><use href="#t" x="875" y="553"/><use href="#t" x="407" y="560"/><use href="#t" x="425" y="560"/><use href="#t" x="443" y="560"/><use href="#t" x="461" y="560"/><use href="#t" x="479" y="560"/><use href="#t" x="497" y="560"/><use href="#t" x="515" y="560"/><use href="#t" x="533" y="560"/><use href="#t" x="551" y="560"/><use href="#t" x="569" y="560"/><use href="#t" x="587" y="560"/><use href="#t" x="605" y="560"/><use href="#t" x="623" y="560"/><use href="#t" x="641" y="560"/><use href="#t" x="659" y="560"/><use href="#t" x="677" y="560"/><use href="#t" x="695" y="560"/><use href="#t" x="713" y="560"/><use href="#t" x="731" y="560"/><use href="#t" x="749" y="560"/><use href="#t" x="767" y="560"/><use href="#t" x="785" y="560"/><use href="#t" x="803" y="560"/><use href="#t" x="821" y="560"/><use href="#t" x="839" y="560"/><use href="#t" x="857" y="560"/><use href="#t" x="875" y="560"/><use href="#t" x="407" y="622"/><use href="#t" x="425" y="622"/><use href="#t" x="443" y="622"/><use href="#t" x="461" y="622"/><use href="#t" x="479" y="622"/><use href="#t" x="497" y="622"/><use href="#t" x="515" y="622"/><use href="#t" x="533" y="622"/><use href="#t" x="551" y="622"/><use href="#t" x="569" y="622"/><use href="#t" x="587" y="622"/><use href="#t" x="605" y="622"/><use href="#t" x="623" y="622"/><use href="#t" x="641" y="622"/><use href="#t" x="659" y="622"/><use href="#t" x="677" y="622"/><use href="#t" x="695" y="622"/><use href="#t" x="713" y="622"/><use href="#t" x="731" y="622"/><use href="#t" x="749" y="622"/><use href="#t" x="767" y="622"/><use href="#t" x="785" y="622"/><use href="#t" x="803" y="622"/><use href="#t" x="821" y="622"/><use href="#t" x="839" y="622"/><use href="#t" x="857" y="622"/><use href="#t" x="875" y="622"/><use href="#t" x="407" y="629"/><use href="#t" x="425" y="629"/><use href="#t" x="443" y="629"/><use href="#t" x="461" y="629"/><use href="#t" x="479" y="629"/><use href="#t" x="497" y="629"/><use href="#t" x="515" y="629"/><use href="#t" x="533" y="629"/><use href="#t" x="551" y="629"/><use href="#t" x="569" y="629"/><use href="#t" x="587" y="629"/><use href="#t" x="605" y="629"/><use href="#t" x="623" y="629"/><use href="#t" x="641" y="629"/><use href="#t" x="659" y="629"/><use href="#t" x="677" y="629"/><use href="#t" x="695" y="629"/><use href="#t" x="713" y="629"/><use href="#t" x="731" y="629"/><use href="#t" x="749" y="629"/><use href="#t" x="767" y="629"/><use href="#t" x="785" y="629"/><use href="#t" x="803" y="629"/><use href="#t" x="821" y="629"/><use href="#t" x="839" y="629"/><use href="#t" x="857" y="629"/><use href="#t" x="875" y="629"/><use href="#t" x="407" y="636"/><use href="#t" x="425" y="636"/><use href="#t" x="443" y="636"/><use href="#t" x="461" y="636"/><use href="#t" x="479" y="636"/><use href="#t" x="497" y="636"/><use href="#t" x="515" y="636"/><use href="#t" x="533" y="636"/><use href="#t" x="551" y="636"/><use href="#t" x="569" y="636"/><use href="#t" x="587" y="636"/><use href="#t" x="605" y="636"/><use href="#t" x="623" y="636"/><use href="#t" x="641" y="636"/><use href="#t" x="659" y="636"/><use href="#t" x="677" y="636"/><use href="#t" x="695" y="636"/><use href="#t" x="713" y="636"/><use href="#t" x="731" y="636"/><use href="#t" x="749" y="636"/><use href="#t" x="767" y="636"/><use href="#t" x="785" y="636"/><use href="#t" x="803" y="636"/><use href="#t" x="821" y="636"/><use href="#t" x="839" y="636"/><use href="#t" x="857" y="636"/><use href="#t" x="875" y="636"/><use href="#t" x="407" y="643"/><use href="#t" x="425" y="643"/><use href="#t" x="443" y="643"/><use href="#t" x="461" y="643"/><use href="#t" x="479" y="643"/><use href="#t" x="497" y="643"/><use href="#t" x="515" y="643"/><use href="#t" x="533" y="643"/><use href="#t" x="551" y="643"/><use href="#t" x="569" y="643"/><use href="#t" x="587" y="643"/><use href="#t" x="605" y="643"/><use href="#t" x="623" y="643"/><use href="#t" x="641" y="643"/><use href="#t" x="659" y="643"/><use href="#t" x="677" y="643"/><use href="#t" x="695" y="643"/><use href="#t" x="713" y="643"/><use href="#t" x="731" y="643"/><use href="#t" x="749" y="643"/><use href="#t" x="767" y="643"/><use href="#t" x="785" y="643"/><use href="#t" x="803" y="643"/><use href="#t" x="821" y="643"/><use href="#t" x="839" y="643"/><use href="#t" x="857" y="643"/><use href="#t" x="875" y="643"/><use href="#t" x="407" y="694"/><use href="#t" x="425" y="694"/><use href="#t" x="443" y="694"/><use href="#t" x="461" y="694"/><use href="#t" x="479" y="694"/><use href="#t" x="497" y="694"/><use href="#t" x="515" y="694"/><use href="#t" x="533" y="694"/><use href="#t" x="551" y="694"/><use href="#t" x="569" y="694"/><use href="#t" x="587" y="694"/><use href="#t" x="605" y="694"/><use href="#t" x="623" y="694"/><use href="#t" x="641" y="694"/><use href="#t" x="659" y="694"/><use href="#t" x="677" y="694"/><use href="#t" x="695" y="694"/><use href="#t" x="713" y="694"/><use href="#t" x="731" y="694"/><use href="#t" x="749" y="694"/><use href="#t" x="767" y="694"/><use href="#t" x="785" y="694"/><use href="#t" x="803" y="694"/><use href="#t" x="821" y="694"/><use href="#t" x="839" y="694"/><use href="#t" x="857" y="694"/><use href="#t" x="875" y="694"/><use href="#t" x="407" y="701"/><use href="#t" x="425" y="701"/><use href="#t" x="443" y="701"/><use href="#t" x="461" y="701"/><use href="#t" x="479" y="701"/><use href="#t" x="497" y="701"/><use href="#t" x="515" y="701"/><use href="#t" x="533" y="701"/><use href="#t" x="551" y="701"/><use href="#t" x="569" y="701"/><use href="#t" x="587" y="701"/><use href="#t" x="605" y="701"/><use href="#t" x="623" y="701"/><use href="#t" x="641" y="701"/><use href="#t" x="659" y="701"/><use href="#t" x="677" y="701"/><use href="#t" x="695" y="701"/><use href="#t" x="713" y="701"/><use href="#t" x="731" y="701"/><use href="#t" x="749" y="701"/><use href="#t" x="767" y="701"/><use href="#t" x="785" y="701"/><use href="#t" x="803" y="701"/><use href="#t" x="821" y="701"/><use href="#t" x="839" y="701"/><use href="#t" x="857" y="701"/><use href="#t" x="875" y="701"/><use href="#t" x="407" y="708"/><use href="#t" x="425" y="708"/><use href="#t" x="443" y="708"/><use href="#t" x="461" y="708"/><use href="#t" x="479" y="708"/><use href="#t" x="497" y="708"/><use href="#t" x="515" y="708"/><use href="#t" x="533" y="708"/><use href="#t" x="551" y="708"/><use href="#t" x="569" y="708"/><use href="#t" x="587" y="708"/><use href="#t" x="605" y="708"/><use href="#t" x="623" y="708"/><use href="#t" x="641" y="708"/><use href="#t" x="659" y="708"/><use href="#t" x="677" y="708"/><use href="#t" x="695" y="708"/><use href="#t" x="713" y="708"/><use href="#t" x="731" y="708"/><use href="#t" x="749" y="708"/><use href="#t" x="767" y="708"/><use href="#t" x="785" y="708"/><use href="#t" x="803" y="708"/><use href="#t" x="821" y="708"/><use href="#t" x="839" y="708"/><use href="#t" x="857" y="708"/><use href="#t" x="875" y="708"/><use href="#t" x="407" y="715"/><use href="#t" x="425" y="715"/><use href="#t" x="443" y="715"/><use href="#t" x="461" y="715"/><use href="#t" x="479" y="715"/><use href="#t" x="497" y="715"/><use href="#t" x="515" y="715"/><use href="#t" x="533" y="715"/><use href="#t" x="551" y="715"/><use href="#t" x="569" y="715"/><use href="#t" x="587" y="715"/><use href="#t" x="605" y="715"/><use href="#t" x="623" y="715"/><use href="#t" x="641" y="715"/><use href="#t" x="659" y="715"/><use href="#t" x="677" y="715"/><use href="#t" x="695" y="715"/><use href="#t" x="713" y="715"/><use href="#t" x="731" y="715"/><use href="#t" x="749" y="715"/><use href="#t" x="767" y="715"/><use href="#t" x="785" y="715"/><use href="#t" x="803" y="715"/><use href="#t" x="821" y="715"/><use href="#t" x="839" y="715"/><use href="#t" x="857" y="715"/><use href="#t" x="875" y="715"/><use href="#t" x="407" y="784"/><use href="#t" x="425" y="784"/><use href="#t" x="443" y="784"/><use href="#t" x="461" y="784"/><use href="#t" x="479" y="784"/><use href="#t" x="497" y="784"/><use href="#t" x="515" y="784"/><use href="#t" x="533" y="784"/><use href="#t" x="551" y="784"/><use href="#t" x="569" y="784"/><use href="#t" x="587" y="784"/><use href="#t" x="605" y="784"/><use href="#t" x="623" y="784"/><use href="#t" x="641" y="784"/><use href="#t" x="659" y="784"/><use href="#t" x="677" y="784"/><use href="#t" x="695" y="784"/><use href="#t" x="713" y="784"/><use href="#t" x="731" y="784"/><use href="#t" x="749" y="784"/><use href="#t" x="767" y="784"/><use href="#t" x="785" y="784"/><use href="#t" x="803" y="784"/><use href="#t" x="821" y="784"/><use href="#t" x="407" y="791"/><use href="#t" x="425" y="791"/><use href="#t" x="443" y="791"/><use href="#t" x="461" y="791"/><use href="#t" x="479" y="791"/><use href="#t" x="497" y="791"/><use href="#t" x="515" y="791"/><use href="#t" x="533" y="791"/><use href="#t" x="551" y="791"/><use href="#t" x="569" y="791"/><use href="#t" x="587" y="791"/><use href="#t" x="605" y="791"/><use href="#t" x="623" y="791"/><use href="#t" x="641" y="791"/><use href="#t" x="659" y="791"/><use href="#t" x="677" y="791"/><use href="#t" x="695" y="791"/><use href="#t" x="713" y="791"/><use href="#t" x="731" y="791"/><use href="#t" x="749" y="791"/><use href="#t" x="767" y="791"/><use href="#t" x="785" y="791"/><use href="#t" x="803" y="791"/><use href="#t" x="821" y="791"/><use href="#t" x="407" y="798"/><use href="#t" x="425" y="798"/><use href="#t" x="443" y="798"/><use href="#t" x="461" y="798"/><use href="#t" x="479" y="798"/><use href="#t" x="497" y="798"/><use href="#t" x="515" y="798"/><use href="#t" x="533" y="798"/><use href="#t" x="551" y="798"/><use href="#t" x="569" y="798"/><use href="#t" x="587" y="798"/><use href="#t" x="605" y="798"/><use href="#t" x="623" y="798"/><use href="#t" x="641" y="798"/><use href="#t" x="659" y="798"/><use href="#t" x="677" y="798"/><use href="#t" x="695" y="798"/><use href="#t" x="713" y="798"/><use href="#t" x="731" y="798"/><use href="#t" x="749" y="798"/><use href="#t" x="767" y="798"/><use href="#t" x="785" y="798"/><use href="#t" x="803" y="798"/><use href="#t" x="821" y="798"/><use href="#t" x="407" y="805"/><use href="#t" x="425" y="805"/><use href="#t" x="443" y="805"/><use href="#t" x="461" y="805"/><use href="#t" x="479" y="805"/><use href="#t" x="497" y="805"/><use href="#t" x="515" y="805"/><use href="#t" x="533" y="805"/><use href="#t" x="551" y="805"/><use href="#t" x="569" y="805"/><use href="#t" x="587" y="805"/><use href="#t" x="605" y="805"/><use href="#t" x="623" y="805"/><use href="#t" x="641" y="805"/><use href="#t" x="659" y="805"/><use href="#t" x="677" y="805"/><use href="#t" x="695" y="805"/><use href="#t" x="713" y="805"/><use href="#t" x="731" y="805"/><use href="#t" x="749" y="805"/><use href="#t" x="767" y="805"/><use href="#t" x="785" y="805"/><use href="#t" x="803" y="805"/><use href="#t" x="821" y="805"/><use href="#t" x="407" y="812"/><use href="#t" x="425" y="812"/><use href="#t" x="443" y="812"/><use href="#t" x="461" y="812"/><use href="#t" x="479" y="812"/><use href="#t" x="497" y="812"/><use href="#t" x="515" y="812"/><use href="#t" x="533" y="812"/><use href="#t" x="551" y="812"/><use href="#t" x="569" y="812"/><use href="#t" x="587" y="812"/><use href="#t" x="605" y="812"/><use href="#t" x="623" y="812"/><use href="#t" x="641" y="812"/><use href="#t" x="659" y="812"/><use href="#t" x="677" y="812"/><use href="#t" x="695" y="812"/><use href="#t" x="713" y="812"/><use href="#t" x="731" y="812"/><use href="#t" x="749" y="812"/><use href="#t" x="767" y="812"/><use href="#t" x="785" y="812"/><use href="#t" x="803" y="812"/><use href="#t" x="821" y="812"/><use href="#t" x="407" y="874"/><use href="#t" x="425" y="874"/><use href="#t" x="443" y="874"/><use href="#t" x="461" y="874"/><use href="#t" x="479" y="874"/><use href="#t" x="497" y="874"/><use href="#t" x="515" y="874"/><use href="#t" x="533" y="874"/><use href="#t" x="551" y="874"/><use href="#t" x="569" y="874"/><use href="#t" x="587" y="874"/><use href="#t" x="605" y="874"/><use href="#t" x="623" y="874"/><use href="#t" x="641" y="874"/><use href="#t" x="659" y="874"/><use href="#t" x="677" y="874"/><use href="#t" x="695" y="874"/><use href="#t" x="713" y="874"/><use href="#t" x="731" y="874"/><use href="#t" x="749" y="874"/><use href="#t" x="767" y="874"/><use href="#t" x="785" y="874"/><use href="#t" x="803" y="874"/><use href="#t" x="407" y="881"/><use href="#t" x="425" y="881"/><use href="#t" x="443" y="881"/><use href="#t" x="461" y="881"/><use href="#t" x="479" y="881"/><use href="#t" x="497" y="881"/><use href="#t" x="515" y="881"/><use href="#t" x="533" y="881"/><use href="#t" x="551" y="881"/><use href="#t" x="569" y="881"/><use href="#t" x="587" y="881"/><use href="#t" x="605" y="881"/><use href="#t" x="623" y="881"/><use href="#t" x="641" y="881"/><use href="#t" x="659" y="881"/><use href="#t" x="677" y="881"/><use href="#t" x="695" y="881"/><use href="#t" x="713" y="881"/><use href="#t" x="731" y="881"/><use href="#t" x="749" y="881"/><use href="#t" x="767" y="881"/><use href="#t" x="785" y="881"/><use href="#t" x="803" y="881"/><use href="#t" x="407" y="888"/><use href="#t" x="425" y="888"/><use href="#t" x="443" y="888"/><use href="#t" x="461" y="888"/><use href="#t" x="479" y="888"/><use href="#t" x="497" y="888"/><use href="#t" x="515" y="888"/><use href="#t" x="533" y="888"/><use href="#t" x="551" y="888"/><use href="#t" x="569" y="888"/><use href="#t" x="587" y="888"/><use href="#t" x="605" y="888"/><use href="#t" x="623" y="888"/><use href="#t" x="641" y="888"/><use href="#t" x="659" y="888"/><use href="#t" x="677" y="888"/><use href="#t" x="695" y="888"/><use href="#t" x="713" y="888"/><use href="#t" x="731" y="888"/><use href="#t" x="749" y="888"/><use href="#t" x="767" y="888"/><use href="#t" x="785" y="888"/><use href="#t" x="803" y="888"/><use href="#t" x="407" y="895"/><use href="#t" x="425" y="895"/><use href="#t" x="443" y="895"/><use href="#t" x="461" y="895"/><use href="#t" x="479" y="895"/><use href="#t" x="497" y="895"/><use href="#t" x="515" y="895"/><use href="#t" x="533" y="895"/><use href="#t" x="551" y="895"/><use href="#t" x="569" y="895"/><use href="#t" x="587" y="895"/><use href="#t" x="605" y="895"/><use href="#t" x="623" y="895"/><use href="#t" x="641" y="895"/><use href="#t" x="659" y="895"/><use href="#t" x="677" y="895"/><use href="#t" x="695" y="895"/><use href="#t" x="713" y="895"/><use href="#t" x="731" y="895"/><use href="#t" x="749" y="895"/><use href="#t" x="767" y="895"/><use href="#t" x="785" y="895"/><use href="#t" x="803" y="895"/><use href="#t" x="407" y="902"/><use href="#t" x="425" y="902"/><use href="#t" x="443" y="902"/><use href="#t" x="461" y="902"/><use href="#t" x="479" y="902"/><use href="#t" x="497" y="902"/><use href="#t" x="515" y="902"/><use href="#t" x="533" y="902"/><use href="#t" x="551" y="902"/><use href="#t" x="569" y="902"/><use href="#t" x="587" y="902"/><use href="#t" x="605" y="902"/><use href="#t" x="623" y="902"/><use href="#t" x="641" y="902"/><use href="#t" x="659" y="902"/><use href="#t" x="677" y="902"/><use href="#t" x="695" y="902"/><use href="#t" x="713" y="902"/><use href="#t" x="731" y="902"/><use href="#t" x="749" y="902"/><use href="#t" x="767" y="902"/><use href="#t" x="785" y="902"/><use href="#t" x="803" y="902"/><use href="#t" x="281" y="892"/><use href="#t" x="299" y="892"/><use href="#t" x="317" y="892"/><use href="#t" x="335" y="892"/><use href="#t" x="353" y="892"/><use href="#t" x="371" y="892"/><use href="#t" x="281" y="899"/><use href="#t" x="299" y="899"/><use href="#t" x="317" y="899"/><use href="#t" x="335" y="899"/><use href="#t" x="353" y="899"/><use href="#t" x="371" y="899"/>
<use href="#T" x="497" y="153"/><use href="#T" x="515" y="153"/><use href="#T" x="533" y="153"/><use href="#T" x="551" y="153"/><use href="#T" x="569" y="153"/><use href="#T" x="587" y="153"/><use href="#T" x="605" y="153"/><use href="#T" x="623" y="153"/><use href="#T" x="641" y="153"/><use href="#T" x="659" y="153"/><use href="#T" x="677" y="153"/><use href="#T" x="695" y="153"/><use href="#T" x="713" y="153"/><use href="#T" x="731" y="153"/><use href="#T" x="749" y="153"/><use href="#T" x="767" y="153"/><use href="#T" x="785" y="153"/><use href="#T" x="803" y="153"/><use href="#T" x="821" y="153"/><use href="#T" x="839" y="153"/><use href="#T" x="857" y="153"/><use href="#T" x="461" y="243"/><use href="#T" x="479" y="243"/><use href="#T" x="497" y="243"/><use href="#T" x="515" y="243"/><use href="#T" x="533" y="243"/><use href="#T" x="551" y="243"/><use href="#T" x="569" y="243"/><use href="#T" x="587" y="243"/><use href="#T" x="605" y="243"/><use href="#T" x="623" y="243"/><use href="#T" x="641" y="243"/><use href="#T" x="659" y="243"/><use href="#T" x="677" y="243"/><use href="#T" x="695" y="243"/><use href="#T" x="713" y="243"/><use href="#T" x="731" y="243"/><use href="#T" x="749" y="243"/><use href="#T" x="767" y="243"/><use href="#T" x="785" y="243"/><use href="#T" x="803" y="243"/><use href="#T" x="821" y="243"/><use href="#T" x="839" y="222"/><use href="#T" x="857" y="222"/><use href="#T" x="875" y="222"/><use href="#T" x="461" y="315"/><use href="#T" x="479" y="315"/><use href="#T" x="497" y="315"/><use href="#T" x="515" y="315"/><use href="#T" x="533" y="315"/><use href="#T" x="551" y="315"/><use href="#T" x="569" y="315"/><use href="#T" x="587" y="315"/><use href="#T" x="605" y="315"/><use href="#T" x="623" y="315"/><use href="#T" x="641" y="315"/><use href="#T" x="659" y="315"/><use href="#T" x="677" y="315"/><use href="#T" x="695" y="315"/><use href="#T" x="713" y="315"/><use href="#T" x="731" y="315"/><use href="#T" x="749" y="315"/><use href="#T" x="767" y="315"/><use href="#T" x="785" y="315"/><use href="#T" x="803" y="315"/><use href="#T" x="821" y="315"/><use href="#T" x="839" y="294"/><use href="#T" x="857" y="294"/><use href="#T" x="875" y="294"/><use href="#T" x="407" y="405"/><use href="#T" x="425" y="405"/><use href="#T" x="443" y="405"/><use href="#T" x="461" y="405"/><use href="#T" x="479" y="405"/><use href="#T" x="497" y="405"/><use href="#T" x="515" y="405"/><use href="#T" x="533" y="405"/><use href="#T" x="551" y="405"/><use href="#T" x="569" y="405"/><use href="#T" x="587" y="405"/><use href="#T" x="605" y="405"/><use href="#T" x="623" y="405"/><use href="#T" x="641" y="405"/><use href="#T" x="659" y="405"/><use href="#T" x="677" y="405"/><use href="#T" x="695" y="405"/><use href="#T" x="713" y="405"/><use href="#T" x="731" y="405"/><use href="#T" x="749" y="405"/><use href="#T" x="767" y="405"/><use href="#T" x="785" y="405"/><use href="#T" x="803" y="405"/><use href="#T" x="821" y="405"/><use href="#T" x="839" y="384"/><use href="#T" x="857" y="384"/><use href="#T" x="875" y="384"/><use href="#T" x="407" y="477"/><use href="#T" x="425" y="477"/><use href="#T" x="443" y="477"/><use href="#T" x="461" y="477"/><use href="#T" x="479" y="477"/><use href="#T" x="497" y="477"/><use href="#T" x="515" y="477"/><use href="#T" x="533" y="477"/><use href="#T" x="551" y="477"/><use href="#T" x="569" y="477"/><use href="#T" x="587" y="477"/><use href="#T" x="605" y="477"/><use href="#T" x="623" y="477"/><use href="#T" x="641" y="477"/><use href="#T" x="659" y="477"/><use href="#T" x="677" y="477"/><use href="#T" x="695" y="477"/><use href="#T" x="713" y="477"/><use href="#T" x="731" y="477"/><use href="#T" x="749" y="477"/><use href="#T" x="767" y="477"/><use href="#T" x="785" y="477"/><use href="#T" x="803" y="477"/><use href="#T" x="821" y="477"/><use href="#T" x="839" y="456"/><use href="#T" x="857" y="456"/><use href="#T" x="875" y="456"/><use href="#T" x="407" y="567"/><use href="#T" x="425" y="567"/><use href="#T" x="443" y="567"/><use href="#T" x="461" y="567"/><use href="#T" x="479" y="567"/><use href="#T" x="497" y="567"/><use href="#T" x="515" y="567"/><use href="#T" x="533" y="567"/><use href="#T" x="551" y="567"/><use href="#T" x="569" y="567"/><use href="#T" x="587" y="567"/><use href="#T" x="605" y="567"/><use href="#T" x="623" y="567"/><use href="#T" x="641" y="567"/><use href="#T" x="659" y="567"/><use href="#T" x="677" y="567"/><use href="#T" x="695" y="567"/><use href="#T" x="713" y="567"/><use href="#T" x="731" y="567"/><use href="#T" x="749" y="567"/><use href="#T" x="767" y="567"/><use href="#T" x="785" y="567"/><use href="#T" x="803" y="567"/><use href="#T" x="821" y="567"/><use href="#T" x="839" y="567"/><use href="#T" x="857" y="567"/><use href="#T" x="875" y="567"/><use href="#T" x="407" y="650"/><use href="#T" x="425" y="650"/><use href="#T" x="443" y="650"/><use href="#T" x="461" y="650"/><use href="#T" x="479" y="650"/><use href="#T" x="497" y="650"/><use href="#T" x="515" y="650"/><use href="#T" x="533" y="650"/><use href="#T" x="551" y="650"/><use href="#T" x="569" y="650"/><use href="#T" x="587" y="650"/><use href="#T" x="605" y="650"/><use href="#T" x="623" y="650"/><use href="#T" x="641" y="650"/><use href="#T" x="659" y="650"/><use href="#T" x="677" y="650"/><use href="#T" x="695" y="650"/><use href="#T" x="713" y="650"/><use href="#T" x="731" y="650"/><use href="#T" x="749" y="650"/><use href="#T" x="767" y="650"/><use href="#T" x="785" y="650"/><use href="#T" x="803" y="650"/><use href="#T" x="821" y="650"/><use href="#T" x="839" y="650"/><use href="#T" x="857" y="650"/><use href="#T" x="875" y="650"/><use href="#T" x="407" y="722"/><use href="#T" x="425" y="722"/><use href="#T" x="443" y="722"/><use href="#T" x="461" y="722"/><use href="#T" x="479" y="722"/><use href="#T" x="497" y="722"/><use href="#T" x="515" y="722"/><use href="#T" x="533" y="722"/><use href="#T" x="551" y="722"/><use href="#T" x="569" y="722"/><use href="#T" x="587" y="722"/><use href="#T" x="605" y="722"/><use href="#T" x="623" y="722"/><use href="#T" x="641" y="722"/><use href="#T" x="659" y="722"/><use href="#T" x="677" y="722"/><use href="#T" x="695" y="722"/><use href="#T" x="713" y="722"/><use href="#T" x="731" y="722"/><use href="#T" x="749" y="722"/><use href="#T" x="767" y="722"/><use href="#T" x="785" y="722"/><use href="#T" x="803" y="722"/><use href="#T" x="821" y="722"/><use href="#T" x="839" y="722"/><use href="#T" x="857" y="722"/><use href="#T" x="875" y="722"/><use href="#T" x="407" y="819"/><use href="#T" x="425" y="819"/><use href="#T" x="443" y="819"/><use href="#T" x="461" y="819"/><use href="#T" x="479" y="819"/><use href="#T" x="497" y="819"/><use href="#T" x="515" y="819"/><use href="#T" x="533" y="819"/><use href="#T" x="551" y="819"/><use href="#T" x="569" y="819"/><use href="#T" x="587" y="819"/><use href="#T" x="605" y="819"/><use href="#T" x="623" y="819"/><use href="#T" x="641" y="819"/><use href="#T" x="659" y="819"/><use href="#T" x="677" y="819"/><use href="#T" x="695" y="819"/><use href="#T" x="713" y="819"/><use href="#T" x="731" y="819"/><use href="#T" x="749" y="819"/><use href="#T" x="767" y="819"/><use href="#T" x="785" y="819"/><use href="#T" x="803" y="819"/><use href="#T" x="821" y="819"/><use href="#T" x="407" y="909"/><use href="#T" x="425" y="909"/><use href="#T" x="443" y="909"/><use href="#T" x="461" y="909"/><use href="#T" x="479" y="909"/><use href="#T" x="497" y="909"/><use href="#T" x="515" y="909"/><use href="#T" x="533" y="909"/><use href="#T" x="551" y="909"/><use href="#T" x="569" y="909"/><use href="#T" x="587" y="909"/><use href="#T" x="605" y="909"/><use href="#T" x="623" y="909"/><use href="#T" x="641" y="909"/><use href="#T" x="659" y="909"/><use href="#T" x="677" y="909"/><use href="#T" x="695" y="909"/><use href="#T" x="713" y="909"/><use href="#T" x="731" y="909"/><use href="#T" x="749" y="909"/><use href="#T" x="767" y="909"/><use href="#T" x="785" y="909"/><use href="#T" x="803" y="909"/><use href="#T" x="281" y="906"/><use href="#T" x="299" y="906"/><use href="#T" x="317" y="906"/><use href="#T" x="335" y="906"/><use href="#T" x="353" y="906"/><use href="#T" x="371" y="906"/>
</svg>

<!-- right panel content -->
<svg class="a" style="left:977px;top:39px" width="165" height="168" viewBox="0 0 165 168">
<defs>
<linearGradient id="pt" x1="0" y1="0" x2="0" y2="1"><stop offset="0" stop-color="#9c9593"/><stop offset="0.45" stop-color="#9c9593" stop-opacity="0"/></linearGradient>
<linearGradient id="mg" x1="0" y1="0" x2="1" y2="0.35"><stop offset="0" stop-color="#8a866e"/><stop offset="0.22" stop-color="#6a665a"/><stop offset="0.6" stop-color="#57534d"/><stop offset="1" stop-color="#524e49"/></linearGradient>
<linearGradient id="tg" x1="0" y1="0" x2="1" y2="0"><stop offset="0" stop-color="#97937a"/><stop offset="1" stop-color="#56534a"/></linearGradient>
<filter id="bl" x="-20%" y="-20%" width="140%" height="140%"><feGaussianBlur stdDeviation="0.85"/></filter>
<filter id="bl1" x="-30%" y="-30%" width="160%" height="160%"><feGaussianBlur stdDeviation="2.6"/></filter>
<filter id="bl2" x="-50%" y="-50%" width="200%" height="200%"><feGaussianBlur stdDeviation="9"/></filter>
<clipPath id="pc"><rect width="165" height="168"/></clipPath>
</defs>
<g clip-path="url(#pc)">
<rect width="165" height="168" fill="#a9a3a2"/>
<rect width="165" height="168" fill="url(#pt)"/>
<ellipse cx="55" cy="105" rx="80" ry="22" transform="rotate(-42 55 105)" fill="#b2acab" filter="url(#bl2)"/>
<path d="M-10 120 L40 168 L-10 168z" fill="#9b9492" filter="url(#bl2)"/>
<path d="M92 112 L170 98 L170 140 L125 150z" fill="#9c9797" filter="url(#bl2)"/>
<path d="M114 96 L170 89 L170 106 L138 102z" fill="#c4c0b8" filter="url(#bl1)"/>
<g filter="url(#bl)">
<path d="M86.5 66 Q83.5 57 89 52.5 Q93 48 96.5 50.5 L108 63 L166 57 L166 89 L111 94.5z" fill="url(#mg)"/>
<path d="M90 51.5 Q93 48.5 96.5 50.5 L107.5 62.8 L89.6 66z" fill="url(#tg)"/>
<path d="M88 67.6 L166 57.2 L166 58.8 L89.3 69.2z" fill="#b6b294"/>
<path d="M86.2 65.5 Q83.8 57.5 88.4 53.2 Q89.6 52 90.2 52.6 Q87.4 58 88.8 66z" fill="#ececf2"/>
</g>
</g>
</svg>
<!-- checkbox -->
<div class="a" style="left:981px;top:221px;width:13px;height:13px;background:#fff;border:1px solid #333"></div>
<svg class="a" style="left:981px;top:221px" width="13" height="13" viewBox="0 0 13 13"><path d="M1.9 6 L4.9 9.2 L10.8 2.6" fill="none" stroke="#3a3a3a" stroke-width="1.15"/></svg>
<div class="t" style="left:996.5px;top:222px;letter-spacing:-0.13px">Show only Places with Quantity</div>
<!-- filter group -->
<div class="a" style="left:976px;top:238px;width:178px;height:80px;border:1px solid;border-color:#a8a4a0 #fff #fff #a8a4a0"></div>
<div class="t" style="left:981px;top:251px">Filter</div>
<div class="a" style="left:1009px;top:247px;width:140px;height:21px;background:#fff;border:1px solid #6e6e6e;border-bottom-color:#d0ccc8"></div>
<div class="t" style="left:1012.5px;top:251px">1. Item.No.</div>
<svg class="a" style="left:1135px;top:254.4px" width="12" height="8" viewBox="0 0 12 8"><path d="M1.5 1.5 L5.5 5.5 L9.5 1.5" fill="none" stroke="#444" stroke-width="1.2"/></svg>
<div class="t" style="left:981px;top:270px">Qty.</div>
<div class="a" style="left:1009px;top:268px;width:139px;height:19px;background:#fff;border:1px solid #b0aca8"></div>
<div class="t" style="left:1011px;top:271px">0</div>
<div class="t" style="left:981px;top:290px">Value</div>
<div class="a" style="left:1009px;top:288px;width:139px;height:21px;background:#fff;border:1px solid #696969"></div>
<!-- info box -->
<div class="a" style="left:977px;top:336px;width:171px;height:178px;background:#fff;border:1px solid #6e6e6e"></div>
<div class="t" style="left:982px;top:340px;letter-spacing:-0.16px"> TS090505L
Fächer insgesamt: 1
Fächer gefüllt: 0
Fächer leer: 1
Maximale Traglast: 0 kg
Derzeitiges Gewicht: 0 kg</div>

<!-- bottom panel content -->
<div class="btn" style="left:12.9px;top:1017.7px;width:74.7px;height:29.3px;line-height:30.3px;background:#ff00ff;border-radius:1px;letter-spacing:0.2px;box-shadow:0 0 0 0.8px #dfe3dc">Exit</div>
<div class="btn" style="left:110px;top:1017.7px;width:75.6px;height:29.3px;line-height:30.3px;background:#008000;border-radius:1px;letter-spacing:0.25px;box-shadow:0 0 0 0.8px #dfe3dc">ReCreate</div>
<div class="t" style="left:420px;top:1040px;letter-spacing:-0.6px">Zoom</div>
<div class="a" style="left:457px;top:1047px;width:159px;height:1px;background:#5d8ccb"></div>
<svg class="a" style="left:509px;top:1041px" width="11" height="14" viewBox="0 0 11 14"><path d="M1 1.2H9.6V9.2L5.3 12.6L1 9.2z" fill="#d2e0f4" stroke="#4878b4" stroke-width="1"/><rect x="4.8" y="4" width="1" height="5" fill="#4878b4"/></svg>

<!-- sub window -->
<div class="a" style="left:0;top:247px;width:401px;height:375px;background:#383633;border-top-right-radius:7px;border-bottom-right-radius:2px;border-bottom:1.5px solid #53524e;border-right:1.5px solid #53524e"></div>
<div class="a" style="left:0;top:248px;width:400px;height:27px;border-top-right-radius:6px;background:linear-gradient(#6a6a68 0,#484844 1.2px,#42413e 9px,#3c3b38 18px,#373633 27px)"></div>
<svg class="a" style="left:0;top:248px" width="400" height="27" viewBox="0 0 400 27"><defs><linearGradient id="gl1" x1="0" y1="0" x2="0" y2="1"><stop offset="0" stop-color="#fff" stop-opacity=".16"/><stop offset="1" stop-color="#fff" stop-opacity=".10"/></linearGradient><clipPath id="gc1"><rect x="-10" y="1" width="410" height="36" rx="5"/></clipPath></defs><ellipse cx="175" cy="-9.2" rx="300" ry="18" fill="url(#gl1)" clip-path="url(#gc1)"/></svg>
<svg class="a" style="left:0;top:254px" width="16" height="17" viewBox="0 0 16 17">
<rect x="-1" y="0" width="16" height="16" rx="0.8" fill="#801b87"/>
<path d="M-0.1 0.4H14.1V7.9Q11 8.2 8.5 7.2Q6 6.3 3.2 6.9L3 6.2H-0.1z" fill="#fff"/>
<text x="0.7" y="5.7" font-family="Liberation Sans" font-weight="bold" font-size="6.6" fill="#760e7c" textLength="12.3" lengthAdjust="spacingAndGlyphs">Av</text>
<path d="M1.3 6.4V15" stroke="#e6cde8" stroke-width="2.2" stroke-dasharray="1.5 0.8"/>
</svg>
<div class="t" style="left:19px;top:254px;font-weight:bold;font-size:11.4px;line-height:14px;color:#fff;letter-spacing:0.05px">Einzellager - Lagerplätze (V_BARTLHPO)</div>
<svg class="a" style="left:338px;top:250px" width="58" height="22" viewBox="0 0 58 22">
<rect x="4.4" y="11.8" width="8" height="2.6" fill="#d0d0d0"/>
<rect x="23.7" y="7" width="9.6" height="7.4" fill="none" stroke="#d0d0d0" stroke-width="1.5"/>
<rect x="23" y="5.8" width="11" height="2.4" fill="#d0d0d0"/>
<path d="M42.4 6.4 L51.4 14.6 M51.4 6.4 L42.4 14.6" stroke="#d8d8d8" stroke-width="2.3" fill="none"/>
</svg>
<div class="a" style="left:0;top:275px;width:394px;height:340px;background:#efebe7;border-top:1px solid #fbfaf9"></div>
<div class="a" style="left:0;top:613px;width:394px;height:2px;background:#f4f2f0"></div>
<div class="t" style="left:7px;top:285px;font-weight:bold;font-size:17.5px;line-height:20px;transform-origin:0 0;transform:scaleX(1.10)">090505L</div>
<div class="a" style="left:0;top:315px;width:394px;height:1px;background:#a8a4a0"></div>
<div class="a" style="left:0;top:316px;width:394px;height:1px;background:#fff"></div>
<!-- grid -->
<div class="a" style="left:2px;top:318px;width:390px;height:295px;background:#fff;border:1px solid #a0a0a0"></div>
<div class="a" style="left:3px;top:319px;width:388px;height:18px;background:linear-gradient(#f4f4f4,#e8e8e8 50%,#dadada)"></div>
<div class="a" style="left:3px;top:337px;width:12px;height:144px;background:linear-gradient(90deg,#f0f0f0,#dcdcdc)"></div>
<div class="a" style="left:14px;top:319px;width:1px;height:18px;background:#c4c4c4"></div>
<div class="a" style="left:14px;top:337px;width:1px;height:144px;background:#e6e2de"></div>
<div class="a" style="left:114px;top:319px;width:1px;height:18px;background:#c4c4c4"></div>
<div class="a" style="left:114px;top:337px;width:1px;height:144px;background:#e6e2de"></div>
<div class="a" style="left:220px;top:319px;width:1px;height:18px;background:#c4c4c4"></div>
<div class="a" style="left:220px;top:337px;width:1px;height:144px;background:#e6e2de"></div>
<div class="a" style="left:300px;top:319px;width:1px;height:18px;background:#c4c4c4"></div>
<div class="a" style="left:300px;top:337px;width:1px;height:144px;background:#e6e2de"></div>
<div class="a" style="left:368px;top:319px;width:1px;height:18px;background:#c4c4c4"></div>
<div class="a" style="left:368px;top:337px;width:1px;height:144px;background:#e6e2de"></div>
<div class="a" style="left:3px;top:336px;width:388px;height:1px;background:#d0d0d0"></div>
<div class="t" style="left:18px;top:323px;font-size:10.7px;letter-spacing:-0.12px;color:#111">Lager.Pos.Nr.</div>
<div class="t" style="left:118px;top:323px;font-size:10.7px;letter-spacing:-0.07px;color:#111">Artikel.Nr.</div>
<div class="t" style="left:224px;top:323px;font-size:10.7px;letter-spacing:0px;color:#111">Ist-Bestand</div>
<div class="t" style="left:304px;top:323px;font-size:10.7px;letter-spacing:0.21px;color:#111">Letzte Bewe</div>
<div class="t" style="left:372px;top:323px;font-size:10.7px;letter-spacing:0px;color:#111">ID</div>
<div class="a" style="left:3px;top:354px;width:388px;height:1px;background:#e6e2de"></div>
<div class="t" style="left:18px;top:341px;letter-spacing:-0.45px">090505L</div>
<div class="t" style="left:118px;top:341px;letter-spacing:-0.1px">902710</div>
<div class="t" style="left:240px;top:341px;width:57px;text-align:right">0,0000</div>
<div class="t" style="left:304px;top:341px">23.12.2016</div>
<div class="a" style="left:3px;top:372px;width:388px;height:1px;background:#e6e2de"></div>
<div class="t" style="left:18px;top:359px;letter-spacing:-0.45px">090505L</div>
<div class="t" style="left:118px;top:359px;letter-spacing:-0.1px">906442</div>
<div class="t" style="left:240px;top:359px;width:57px;text-align:right">0,0000</div>
<div class="t" style="left:304px;top:359px">10.04.2017</div>
<div class="a" style="left:3px;top:390px;width:388px;height:1px;background:#e6e2de"></div>
<div class="t" style="left:18px;top:377px;letter-spacing:-0.45px">090505L</div>
<div class="t" style="left:118px;top:377px;letter-spacing:-0.1px">905304</div>
<div class="t" style="left:240px;top:377px;width:57px;text-align:right">0,0000</div>
<div class="t" style="left:304px;top:377px">09.03.2017</div>
<div class="a" style="left:3px;top:408px;width:388px;height:1px;background:#e6e2de"></div>
<div class="t" style="left:18px;top:395px;letter-spacing:-0.45px">090505L</div>
<div class="t" style="left:118px;top:395px;letter-spacing:-0.1px">901955</div>
<div class="t" style="left:240px;top:395px;width:57px;text-align:right">0,0000</div>
<div class="t" style="left:304px;top:395px">27.03.2017</div>
<div class="a" style="left:3px;top:426px;width:388px;height:1px;background:#e6e2de"></div>
<div class="t" style="left:18px;top:413px;letter-spacing:-0.45px">090505L</div>
<div class="t" style="left:118px;top:413px;letter-spacing:-0.1px">906949</div>
<div class="t" style="left:240px;top:413px;width:57px;text-align:right">0,0000</div>
<div class="t" style="left:304px;top:413px">23.12.2016</div>
<div class="a" style="left:3px;top:444px;width:388px;height:1px;background:#e6e2de"></div>
<div class="t" style="left:18px;top:431px;letter-spacing:-0.45px">090505L</div>
<div class="t" style="left:118px;top:431px;letter-spacing:-0.1px">905308</div>
<div class="t" style="left:240px;top:431px;width:57px;text-align:right">0,0000</div>
<div class="t" style="left:304px;top:431px">06.02.2017</div>
<div class="a" style="left:3px;top:462px;width:388px;height:1px;background:#e6e2de"></div>
<div class="t" style="left:18px;top:449px;letter-spacing:-0.45px">090505L</div>
<div class="t" style="left:118px;top:449px;letter-spacing:-0.4px">BL000010</div>
<div class="t" style="left:240px;top:449px;width:57px;text-align:right">0,0000</div>
<div class="t" style="left:304px;top:449px">23.02.2017</div>
<div class="a" style="left:3px;top:480px;width:388px;height:1px;background:#e6e2de"></div>
<div class="t" style="left:18px;top:467px;letter-spacing:-0.45px">090505L</div>
<div class="t" style="left:118px;top:467px;letter-spacing:-0.1px">904668</div>
<div class="t" style="left:240px;top:467px;width:57px;text-align:right">0,0000</div>
<div class="t" style="left:304px;top:467px">06.04.2017</div>
<svg class="a" style="left:3px;top:337px" width="13" height="18" viewBox="0 0 13 18"><path d="M3.2 1.2 L3.2 12.2 L8.8 6.7z" fill="#000"/><path d="M10.5 2v14" stroke="#555" stroke-width="1" stroke-dasharray="1 1"/></svg>
<!-- scrollbar -->
<div class="a" style="left:3px;top:595px;width:388px;height:17px;background:linear-gradient(#d8d6d4,#e6e4e2 40%,#eceae8)"></div>
<div class="a" style="left:3px;top:596px;width:16px;height:16px;background:#f2f2f2;border:1px solid #b4b4b4;border-radius:3px"></div>
<div class="a" style="left:20px;top:596px;width:16px;height:16px;background:#f2f2f2;border:1px solid #b4b4b4;border-radius:3px"></div>
<div class="a" style="left:374px;top:596px;width:16px;height:16px;background:#f2f2f2;border:1px solid #b4b4b4;border-radius:3px"></div>
<svg class="a" style="left:3px;top:596px" width="388" height="16" viewBox="0 0 388 16"><path d="M9.5 5 L9.5 11 L6 8z M378 5 L378 11 L381.5 8z" fill="#505050"/><path d="M23.5 6v4M26.5 6v4" stroke="#888" stroke-width="1"/></svg>
<!-- cursor -->
<svg class="a" style="left:241px;top:261px" width="14" height="22" viewBox="0 0 14 22"><path d="M1 1 L1 17 L4.8 13.6 L7.6 20 L10 19 L7.2 12.8 L12.4 12.6z" fill="#fff" stroke="#000" stroke-width="1"/></svg>
</body>
</html>
